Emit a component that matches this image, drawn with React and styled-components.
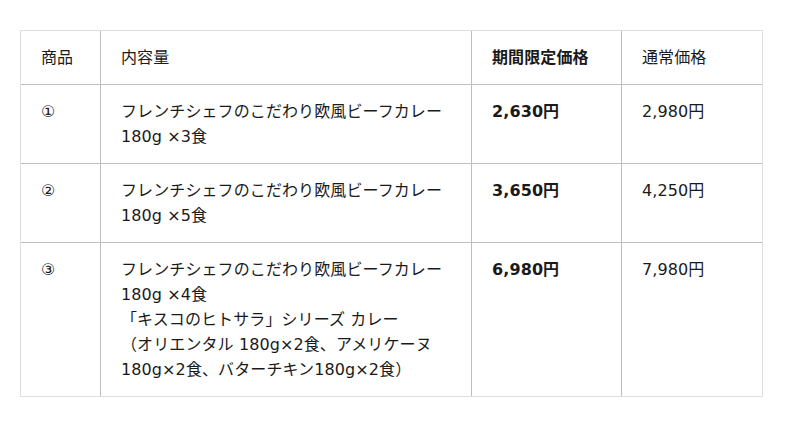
import React from 'react'
import styled, { createGlobalStyle } from 'styled-components'

const GlobalStyle = createGlobalStyle`
  body {
    margin: 0;
    background: #fff;
    font-family: "DejaVu Sans", "Noto Sans CJK JP", sans-serif;
    color: #1a1a1a;
  }
`

const Page = styled.div`
  padding: 30px 20px;
`

const Table = styled.table`
  width: 743px;
  table-layout: fixed;
  border-collapse: separate;
  border-spacing: 0;
  border: 1px solid #dedede;
  font-size: 16px;
  line-height: 25px;
`

const Cell = styled.td`
  padding: 14px 20px;
  vertical-align: top;
  text-align: left;
  font-weight: ${(p) => (p.$bold ? 'bold' : 'normal')};
  letter-spacing: 0.1px;
  border-right: 1px solid #bdbdbd;
  border-bottom: 1px solid #bdbdbd;

  &:last-child {
    border-right: none;
  }
  tr:last-child > & {
    border-bottom: none;
  }
`

const rows = [
  {
    no: '①',
    lines: ['フレンチシェフのこだわり欧風ビーフカレー', '180g ×3食'],
    sale: '2,630円',
    price: '2,980円',
  },
  {
    no: '②',
    lines: ['フレンチシェフのこだわり欧風ビーフカレー', '180g ×5食'],
    sale: '3,650円',
    price: '4,250円',
  },
  {
    no: '③',
    lines: [
      'フレンチシェフのこだわり欧風ビーフカレー',
      '180g ×4食',
      '「キスコのヒトサラ」シリーズ カレー',
      '（オリエンタル 180g×2食、アメリケーヌ',
      '180g×2食、バターチキン180g×2食）',
    ],
    sale: '6,980円',
    price: '7,980円',
  },
]

export default function App() {
  return (
    <Page>
      <GlobalStyle />
      <Table>
        <colgroup>
          <col style={{ width: 80 }} />
          <col style={{ width: 371 }} />
          <col style={{ width: 150 }} />
          <col />
        </colgroup>
        <tbody>
          <tr>
            <Cell as="th">商品</Cell>
            <Cell as="th">内容量</Cell>
            <Cell as="th" $bold>期間限定価格</Cell>
            <Cell as="th">通常価格</Cell>
          </tr>
          {rows.map((r) => (
            <tr key={r.no}>
              <Cell>{r.no}</Cell>
              <Cell>
                {r.lines.map((l, i) => (
                  <React.Fragment key={i}>
                    {i > 0 && <br />}
                    {l}
                  </React.Fragment>
                ))}
              </Cell>
              <Cell $bold>{r.sale}</Cell>
              <Cell>{r.price}</Cell>
            </tr>
          ))}
        </tbody>
      </Table>
    </Page>
  )
}
